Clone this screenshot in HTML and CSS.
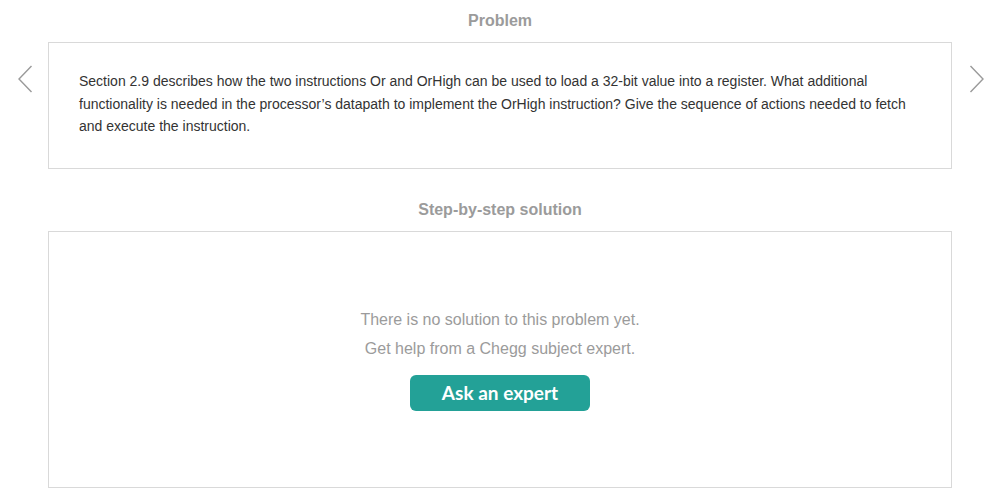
FILE: index.html
```html
<!DOCTYPE html>
<html>
<head>
<meta charset="utf-8">
<link rel="stylesheet" href="styles.css">
</head>
<body>
<div class="page">
  <h2 class="section-title title-problem">Problem</h2>
  <div class="problem-row">
    <div class="nav nav-left">
      <svg width="16" height="28" viewBox="0 0 16 28"><path d="M14.5 1 L2 14 L14.5 27" fill="none" stroke="#9a9a9a" stroke-width="1.4"/></svg>
    </div>
    <div class="card problem-card">
      <p class="problem-text">Section 2.9 describes how the two instructions Or and OrHigh can be used to load a 32-bit value into a register. What additional functionality is needed in the processor’s datapath to implement the OrHigh instruction? Give the sequence of actions needed to fetch and execute the instruction.</p>
    </div>
    <div class="nav nav-right">
      <svg width="16" height="28" viewBox="0 0 16 28"><path d="M1.5 1 L14 14 L1.5 27" fill="none" stroke="#9a9a9a" stroke-width="1.4"/></svg>
    </div>
  </div>
  <h2 class="section-title title-solution">Step-by-step solution</h2>
  <div class="solution-row">
    <div class="card solution-card">
      <p class="empty-line">There is no solution to this problem yet.</p>
      <p class="empty-line">Get help from a Chegg subject expert.</p>
      <button class="ask-btn">Ask an expert</button>
    </div>
  </div>
</div>
</body>
</html>
```

FILE: styles.css
```css
* { box-sizing: border-box; }
html, body { margin: 0; padding: 0; background: #fff; }
body { font-family: "Liberation Sans", Arial, Helvetica, sans-serif; }
.page { width: 1000px; }
.section-title {
  margin: 0;
  text-align: center;
  font-size: 16px;
  line-height: 20px;
  font-weight: bold;
  color: #9b9b9b;
}
.title-problem { padding-top: 11px; margin-bottom: 11px; }
.title-solution { margin-top: 31px; margin-bottom: 11px; }
.problem-row { display: flex; align-items: flex-start; }
.nav { width: 48px; display: flex; padding-top: 23px; }
.nav-left { justify-content: flex-start; padding-left: 17px; }
.nav-right { justify-content: flex-start; padding-left: 17px; }
.card {
  width: 904px;
  border: 1px solid #d9d9d9;
  background: #fff;
}
.problem-card { padding: 27px 30px 30px 30px; }
.problem-text {
  margin: 0;
  font-size: 14px;
  line-height: 22.5px;
  color: #333;
}
.solution-row { display: flex; padding-left: 48px; }
.solution-card {
  height: 257px;
  padding-top: 73px;
  display: flex;
  flex-direction: column;
  align-items: center;
}
.empty-line {
  margin: 0;
  font-size: 16px;
  line-height: 29px;
  color: #9b9b9b;
}
.ask-btn {
  margin-top: 12px;
  width: 180px;
  height: 36px;
  border: none;
  border-radius: 6px;
  background: #23a197;
  color: #fff;
  font-family: Lato, "Open Sans", sans-serif;
  font-weight: bold;
  font-size: 19px;
  padding: 0;
  cursor: pointer;
}
```
